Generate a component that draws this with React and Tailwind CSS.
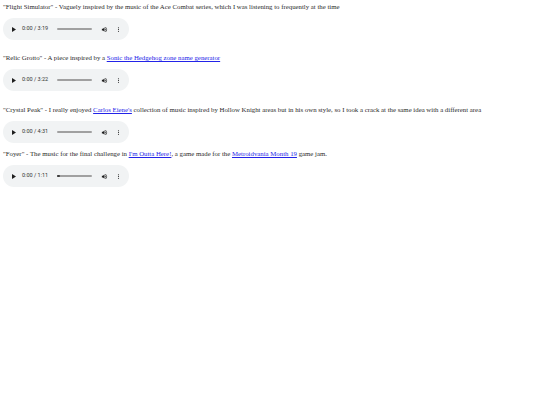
const tracks = [
  {
    time: '3:19',
    text: <>"Flight Simulator" - Vaguely inspired by the music of the Ace Combat series, which I was listening to frequently at the time</>,
    gapAfter: 'mt-[14px]',
  },
  {
    time: '3:22',
    text: (
      <>
        "Relic Grotto" - A piece inspired by a <a href="#" className="text-[#2323e8] underline">Sonic the Hedgehog zone name generator</a>
      </>
    ),
    gapAfter: 'mt-[15px]',
  },
  {
    time: '4:31',
    text: (
      <>
        "Crystal Peak" - I really enjoyed <a href="#" className="text-[#2323e8] underline">Carlos Eiene's</a> collection of music inspired by Hollow Knight areas but in his own style, so I took a crack at the same idea with a different area
      </>
    ),
    gapAfter: 'mt-[7px]',
  },
  {
    time: '1:11',
    buffered: true,
    text: (
      <>
        "Foyer" - The music for the final challenge in <a href="#" className="text-[#2323e8] underline">I'm Outta Here!</a>, a game made for the <a href="#" className="text-[#2323e8] underline">Metroidvania Month 19</a> game jam.
      </>
    ),
  },
];

function Player({ time, buffered }) {
  return (
    <div className="mt-[7px] flex h-[22px] w-[126px] items-center rounded-full bg-[#f1f3f4] text-[#1f1f1f]">
      {/* play */}
      <svg viewBox="0 0 10 12" className="ml-[9px] h-[5px] w-[4px]" fill="currentColor">
        <path d="M0 0 L10 6 L0 12 Z" />
      </svg>
      <span className="ml-[6px] w-[31px] whitespace-nowrap font-['Roboto',sans-serif] text-[5.5px] leading-none text-[#333]">
        0:00 / {time}
      </span>
      {/* progress track */}
      <div className="relative ml-[4px] h-[1.5px] w-[35px] rounded-full bg-[#a0a0a0]">
        {buffered && <div className="absolute left-0 top-[-0.5px] h-[2.5px] w-[3px] rounded-full bg-[#3c3c3c]" />}
      </div>
      {/* volume */}
      <svg viewBox="0 0 24 24" className="ml-[9px] h-[7px] w-[7px]" fill="currentColor">
        <path d="M3 9v6h4l5 5V4L7 9H3zm13.5 3c0-1.77-1.02-3.29-2.5-4.03v8.05c1.48-.73 2.5-2.25 2.5-4.02zM14 3.23v2.06c2.89.86 5 3.54 5 6.71s-2.11 5.85-5 6.71v2.06c4.01-.91 7-4.49 7-8.77s-2.99-7.86-7-8.77z" />
      </svg>
      {/* menu */}
      <svg viewBox="0 0 24 24" className="ml-[7px] h-[7px] w-[7px]" fill="currentColor">
        <path d="M12 8c1.1 0 2-.9 2-2s-.9-2-2-2-2 .9-2 2 .9 2 2 2zm0 2c-1.1 0-2 .9-2 2s.9 2 2 2 2-.9 2-2-.9-2-2-2zm0 6c-1.1 0-2 .9-2 2s.9 2 2 2 2-.9 2-2-.9-2-2-2z" />
      </svg>
    </div>
  );
}

export default function App() {
  return (
    <div className="min-h-[405px] w-[540px] bg-white px-[3px] pt-[3px] font-['Liberation_Serif',serif] text-[6.8px] leading-[8px] text-[#2a2a2a]">
      {tracks.map((t, i) => (
        <div key={i} className={i > 0 ? tracks[i - 1].gapAfter : ''}>
          <div className="whitespace-nowrap">{t.text}</div>
          <Player time={t.time} buffered={t.buffered} />
        </div>
      ))}
    </div>
  );
}
